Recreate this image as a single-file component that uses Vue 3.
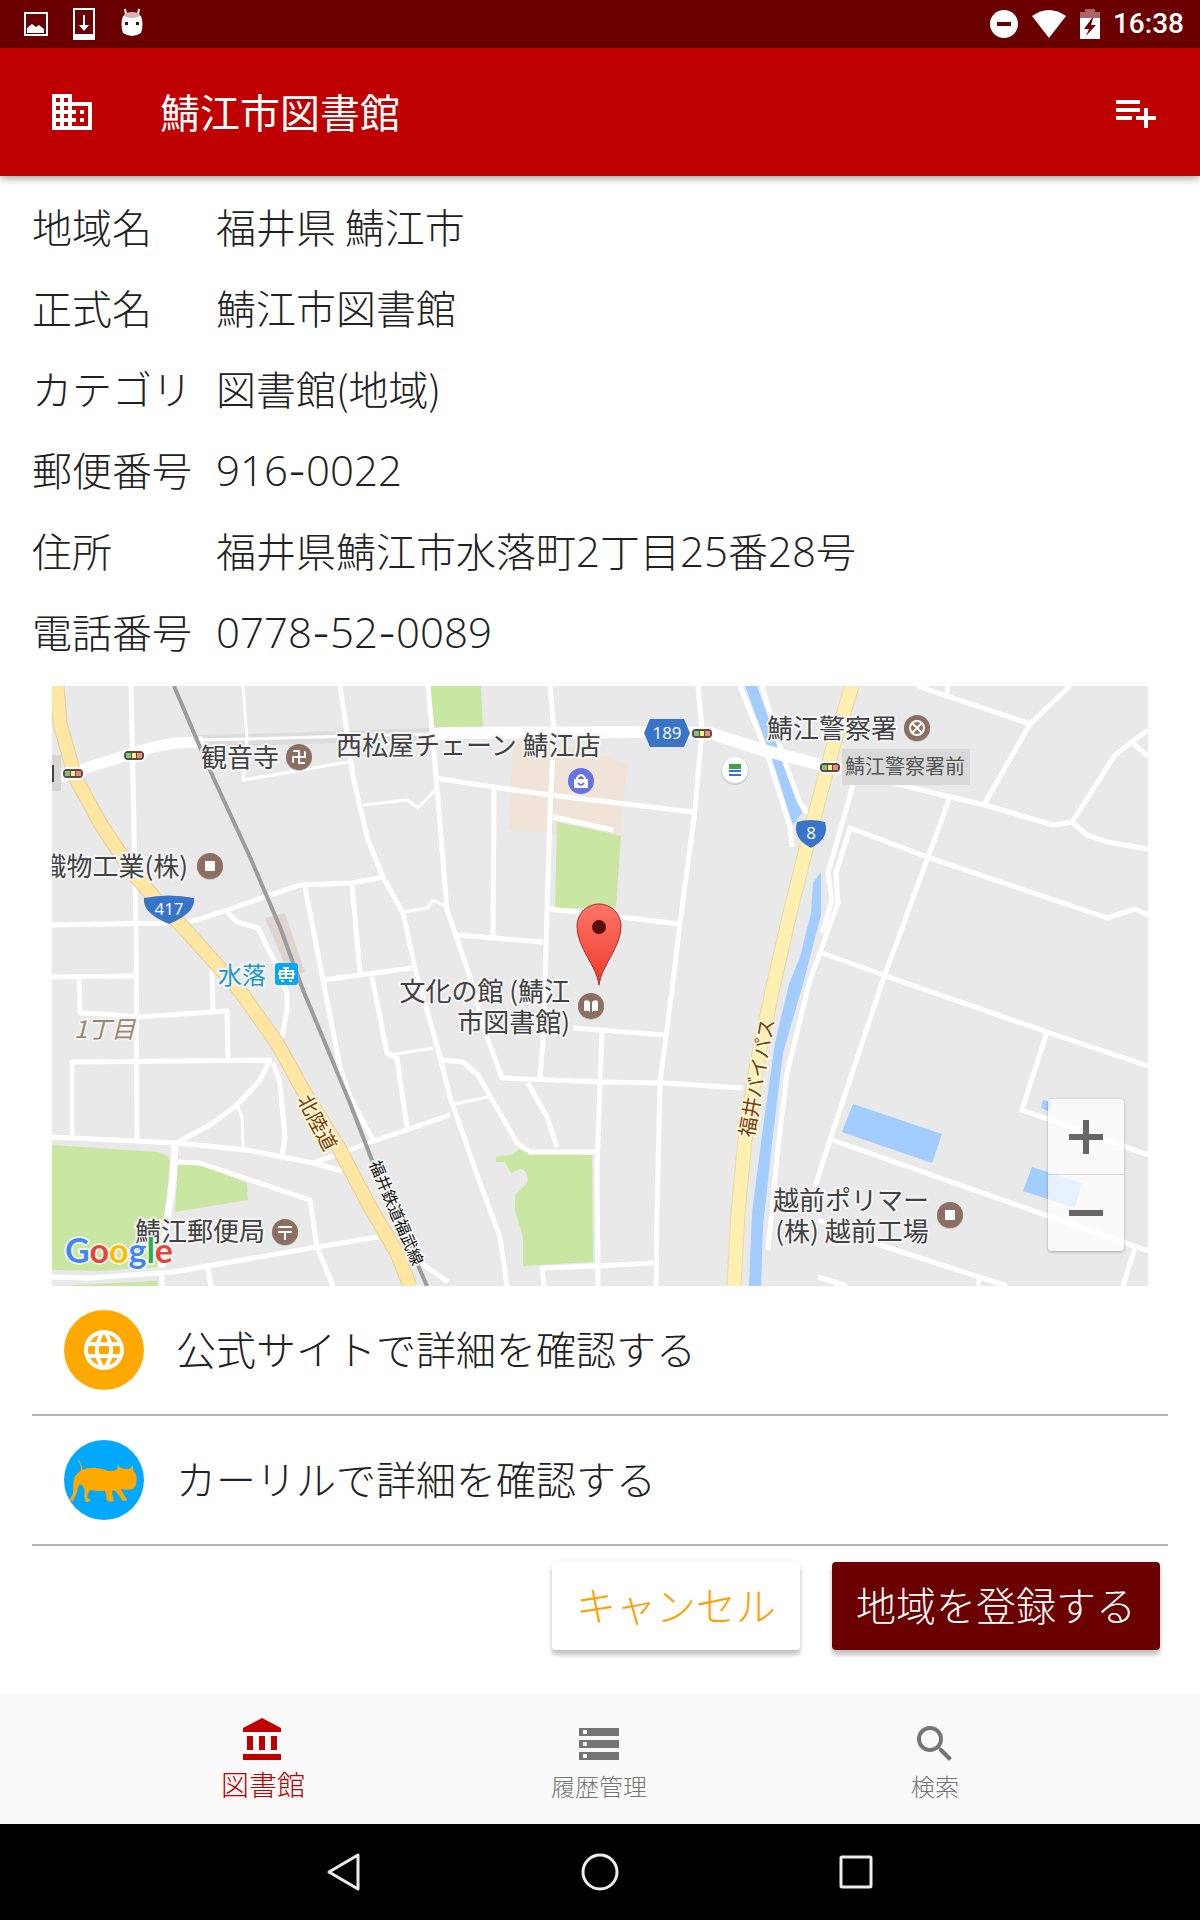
<script setup>
import { ref } from 'vue'

const details = [
  { label: '地域名', value: '福井県 鯖江市' },
  { label: '正式名', value: '鯖江市図書館' },
  { label: 'カテゴリ', value: '図書館(地域)' },
  { label: '郵便番号', value: '916-0022' },
  { label: '住所', value: '福井県鯖江市水落町2丁目25番28号' },
  { label: '電話番号', value: '0778-52-0089' },
].map((row) => ({ ...row, parts: row.value.match(/[0-9]+|-|[^0-9-]+/g) }))

const partClass = (part) => ({ digits: /^[0-9]/.test(part), dash: part === '-' })

const tabs = [
  { name: '図書館', icon: 'M4 10v7h3v-7H4zm6 0v7h3v-7h-3zM2 22h19v-3H2v3zm14-12v7h3v-7h-3zm-4.500-9L2 6v2h19V6l-9.500-5z' },
  { name: '履歴管理', icon: 'M2 20h20v-4H2v4zm2-3h2v2H4v-2zM2 4v4h20V4H2zm4 3H4V5h2v2zm-4 7h20v-4H2v4zm2-3h2v2H4v-2z' },
  { name: '検索', icon: 'M15.500 14h-.790l-.280-.270C15.410 12.590 16 11.110 16 9.500 16 5.910 13.090 3 9.500 3S3 5.910 3 9.500 5.910 16 9.500 16c1.610 0 3.090-.590 4.230-1.570l.270.280v.790l5 4.990L20.490 19l-4.990-5zm-6 0C7.010 14 5 11.990 5 9.500S7.010 5 9.500 5 14 7.010 14 9.500 11.990 14 9.500 14z' },
]
const activeTab = ref('図書館')

const parks = [
  '431,686 481,686 483,727 432,728',
  '557,822 621,836 616,908 555,908',
  '52,1145 158,1152 168,1156 170,1162 160,1267 97,1271 52,1270',
  '178,1165 188,1163 202,1165 247,1183 248,1200 175,1212',
  '73,1285 158,1281 158,1286 73,1286',
]

const water = [
  '745,686 757,686 783,759 802,813 793,825 772,759',
  '821,872 813,883 811,913 800,957 789,984 775,1043 763,1127 752,1213 749,1286 761,1286 763,1227 772,1143 783,1053 803,984 821,915',
  '853,1104 942,1134 932,1163 842,1132',
  '1032,1167 1082,1183 1075,1208 1023,1191',
  '1043,1100 1052,1102 1050,1112 1041,1108',
]

const streets = [
  '131,686 135,880 136,923 137,1140',
  '340,686 347,733 353,777 368,840 383,877 403,913 417,977 427,1010 440,1057 450,1097 480,1183 500,1237 507,1286',
  '428,686 435,763 447,910 470,977 487,1037 502,1078 600,1082 663,1083 743,1088',
  '435,778 493,787 550,795 693,812',
  '52,925 167,923 197,920 227,910 300,885 352,883 383,877',
  '227,912 237,922 258,928 270,953 277,965 287,993 287,1010 282,1037',
  '305,887 323,980 340,1067 350,1097 373,1140',
  '352,885 360,973',
  '323,980 412,968',
  '372,977 387,1053 397,1058 407,1127',
  '52,977 135,976',
  '79,977 80,1013 117,1015 137,1017 227,1011 228,1058',
  '212,966 213,1010',
  '72,1137 72,1062 270,1060 260,1080 237,1105 210,1125 178,1142',
  '273,1063 280,1083 285,1137 282,1155',
  '50,1137 177,1143 247,1150 313,1163 342,1171',
  '313,1163 377,1140 450,1115',
  '178,1162 200,1163 310,1200 317,1247 333,1286',
  '52,1277 90,1278 173,1272 317,1247 378,1237',
  '208,1268 211,1286',
  '162,1270 162,1286',
  '417,1260 448,1282',
  '550,686 554,730 550,813 545,980 543,1040 540,1078',
  '698,686 702,730 695,810 680,923 672,990 660,1083 657,1213 656,1286',
  '494,787 493,937',
  '457,935 543,942',
  '553,817 613,830',
  '550,909 680,924',
  '573,1028 665,1035',
  '602,1032 597,1167 598,1286',
  '440,1060 463,1062 478,1075 517,1143 530,1152 597,1152',
  '528,1083 547,1117 557,1147',
  '544,1286 542,1268 598,1266 653,1263',
  '740,686 767,753 790,827 792,847',
  '762,686 783,757 800,803 808,813',
  '822,767 910,787 950,797 985,805 1053,825 1072,822 1115,755 1132,742 1148,730',
  '853,785 828,873 832,900 822,933',
  '768,1250 778,1147 787,1073 810,980 838,903 836,873 850,828 927,857 1107,918 1135,909 1148,915',
  '950,797 883,980 830,1140 815,1187',
  '822,953 897,980 1047,1032 1148,1066',
  '917,686 1030,724 1070,686',
  '948,686 947,693',
  '1030,724 985,803',
  '1132,742 1148,757',
  '1072,822 1087,835 1107,842 1148,849',
  '1047,1032 1022,1110 1148,1155',
  '832,1140 1148,1251',
  '1135,1248 1123,1286',
  '818,1220 880,1245 1007,1286',
  '980,1277 978,1286',
  '818,1277 847,1286',
]

const lanes = [
  '197,740 247,739 432,734',
  '243,686 247,740 243,780 348,762',
  '363,805 407,800 418,808 435,790',
  '403,912 427,908 433,900 447,907',
  '237,1105 242,1117 243,1147',
  '390,1055 433,1048',
  '450,1105 488,1097',
]

const signals = [[124, 751], [63, 769], [692, 729], [820, 763]]

const places = [
  { x: 201, y: 767, anchor: 'start', text: '観音寺' },
  { x: 336, y: 755, anchor: 'start', text: '西松屋チェーン 鯖江店' },
  { x: 767, y: 738, anchor: 'start', text: '鯖江警察署' },
  { x: 188, y: 876, anchor: 'end', text: '織物工業(株)' },
  { x: 570, y: 1001, anchor: 'end', text: '文化の館 (鯖江' },
  { x: 570, y: 1032, anchor: 'end', text: '市図書館)' },
  { x: 851, y: 1210, anchor: 'middle', text: '越前ポリマー' },
  { x: 852, y: 1241, anchor: 'middle', text: '(株) 越前工場' },
  { x: 135, y: 1241, anchor: 'start', text: '鯖江郵便局' },
]

const badges = [
  { x: 299, y: 757, icon: 'M-6-6H0V6H6M-6 6V0H6V-6' },
  { x: 917, y: 728, icon: 'M-5-5L5 5M5-5L-5 5M7 0A7 7 0 1 1-7 0A7 7 0 1 1 7 0' },
  { x: 210, y: 866, solid: 'M-5-5h10v10h-10z' },
  { x: 950, y: 1215, solid: 'M-5-5h10v10h-10z' },
  { x: 285, y: 1232, icon: 'M-7-5H7M-7 0H7M0 0V8' },
  { x: 591, y: 1006, solid: 'M-7-5Q-3-7-1-4V6Q-3 4-7 5zM7-5Q3-7 1-4V6Q3 4 7 5z' },
]
</script>

<template>
  <div class="screen">
    <div class="status">
      <div class="status-group notices">
        <svg width="24" height="32" viewBox="0 0 24 32" aria-hidden="true">
          <path d="M1 5h22v22H1z" fill="none" stroke="#fff" stroke-width="2" />
          <path d="M3 25v-5l5-4 4 3 3-2 5 4v4z" fill="#fff" />
        </svg>
        <svg width="24" height="32" viewBox="0 0 24 32" aria-hidden="true">
          <path fill="#fff" fill-rule="evenodd" d="M1 0h22v32H1zM3 2v24h18V2zM11 7h2v10h4l-5 6-5-6h4z" />
        </svg>
        <svg width="24" height="32" viewBox="0 0 24 32" aria-hidden="true">
          <path d="M6 6L5 1M18 6l1-5" stroke="#fff" stroke-width="2" />
          <path d="M3 8Q12 2 21 8Q24 16 21 25Q12 31 3 25Q0 16 3 8z" fill="#fff" />
          <ellipse cx="12" cy="7" rx="8" ry="3" fill="#d4b4b4" />
          <path d="M5 14h3v3H5zM16 14h3v3h-3z" fill="#6b0000" />
        </svg>
      </div>
      <div class="status-group">
        <svg width="28" height="28" viewBox="0 0 28 28" aria-hidden="true">
          <circle cx="14" cy="14" r="14" fill="#fff" />
          <path d="M7 12h14v4H7z" fill="#6b0000" />
        </svg>
        <svg width="36" height="30" viewBox="0 0 36 30" aria-hidden="true">
          <path d="M1 7Q18-5 35 7L18 29z" fill="#fff" />
        </svg>
        <svg width="20" height="30" viewBox="0 0 20 30" aria-hidden="true">
          <path d="M0 3h5V0h10v3h5v7H0z" fill="#a66" />
          <path d="M0 9h20v21H0z" fill="#fff" />
          <path d="M12 9L4 20h5l-3 7 10-11h-5l2-7z" fill="#6b0000" />
        </svg>
        <time class="clock">16:38</time>
      </div>
    </div>

    <header class="toolbar">
      <svg class="icon" viewBox="0 0 24 24" aria-hidden="true">
        <path d="M12 7V3H2v18h20V7H12zM6 19H4v-2h2v2zm0-4H4v-2h2v2zm0-4H4V9h2v2zm0-4H4V5h2v2zm4 12H8v-2h2v2zm0-4H8v-2h2v2zm0-4H8V9h2v2zm0-4H8V5h2v2zm10 12h-8v-2h2v-2h-2v-2h2v-2h-2V9h8v10zm-2-8h-2v2h2v-2zm0 4h-2v2h2v-2z" />
      </svg>
      <h1 class="title">鯖江市図書館</h1>
      <button class="plain" type="button" aria-label="リストに追加">
        <svg class="icon" viewBox="0 0 24 24" aria-hidden="true">
          <path d="M14 10H2v2h12v-2zm0-4H2v2h12V6zm4 8v-4h-2v4h-4v2h4v4h2v-4h4v-2h-4zM2 16h8v-2H2v2z" />
        </svg>
      </button>
    </header>

    <main class="content">
      <dl class="details">
        <div v-for="row in details" :key="row.label" class="detail">
          <dt>{{ row.label }}</dt>
          <dd><span v-for="(part, i) in row.parts" :key="i" :class="partClass(part)">{{ part }}</span></dd>
        </div>
      </dl>

      <section class="map" aria-label="地図">
        <svg class="map-canvas" viewBox="52 686 1096 600">
          <rect x="52" y="686" width="1096" height="600" fill="#e9e9e9" />
          <polygon points="513,740 553,740 610,758 627,763 620,838 550,833 509,830" fill="#f0e4d8" />
          <polygon points="265,918 285,913 305,972 290,977" fill="#e0d4d0" />
          <g fill="#cae6a3">
            <polygon v-for="shape in parks" :key="shape" :points="shape" />
            <path d="M496 1156L512 1155 519 1149 530 1153 592 1155 593 1262 523 1266 523 1237 515 1210 515 1195 527 1183Q529 1170 520 1169L511 1173 505 1162H496z" />
          </g>
          <polygon v-for="shape in water" :key="shape" :points="shape" fill="#a3ccff" />

          <polyline points="197,741 247,740 432,734" fill="none" stroke="#dcdcdc" stroke-width="12" />
          <g class="road">
            <polyline v-for="line in lanes" :key="line" :points="line" stroke-width="3" />
            <polyline v-for="line in streets" :key="line" :points="line" stroke-width="5" />
            <polyline points="175,1143 173,1180 167,1220 161,1267" stroke-width="7" />
            <polyline points="60,777 83,769 127,755 153,747 177,743 203,742" stroke-width="11" />
            <polyline points="432,734 450,733 650,732 710,733 763,750 826,766" stroke-width="12" />
          </g>

          <g fill="none" stroke-linejoin="round">
            <polyline points="57,686 60,723 75,777 100,823 133,873 158,902 183,927 217,965 240,991 277,1043 303,1090 340,1150 370,1207 397,1253 410,1286" stroke="#e6cf95" stroke-width="15" />
            <polyline points="57,686 60,723 75,777 100,823 133,873 158,902 183,927 217,965 240,991 277,1043 303,1090 340,1150 370,1207 397,1253 410,1286" stroke="#ffe6a3" stroke-width="13" />
            <polyline points="852,686 833,747 810,833 790,913 773,987 757,1063 745,1140 738,1213 734,1286" stroke="#e8d9a0" stroke-width="15" />
            <polyline points="852,686 833,747 810,833 790,913 773,987 757,1063 745,1140 738,1213 734,1286" stroke="#ffefb0" stroke-width="13" />
            <polyline points="174,686 200,747 213,777 250,857 280,927 303,990 350,1103 373,1163 417,1263 427,1286" stroke="#9c9c9c" stroke-width="4" />
          </g>

          <g v-for="[x, y] in signals" :key="x" :transform="`translate(${x} ${y})`">
            <rect x="-2" y="-2" width="24" height="13" rx="6" fill="#fff" />
            <rect width="20" height="9" rx="4" fill="#5d4a40" />
            <rect x="2" y="2" width="5" height="5" fill="#7fc08a" />
            <rect x="8" y="2" width="4" height="5" fill="#fff07a" />
            <rect x="13" y="2" width="5" height="5" fill="#ee8a84" />
          </g>

          <rect x="52" y="755" width="9" height="36" fill="#d6d6d6" />
          <rect x="52" y="765" width="2" height="17" fill="#424242" />
          <rect x="842" y="749" width="128" height="36" fill="#d9d9d9" />
          <text x="845" y="774" class="stop">鯖江警察署前</text>

          <text v-for="place in places" :key="place.text" class="place" :x="place.x" :y="place.y" :text-anchor="place.anchor">{{ place.text }}</text>
          <text x="218" y="984" class="place station">水落</text>
          <text x="74" y="1038" class="place block">1丁目</text>
          <text class="place route-name" text-anchor="middle" transform="translate(311 1126) rotate(62)">北陸道</text>
          <text class="place route-name" text-anchor="middle" transform="translate(764 1079) rotate(-80)">福井バイパス</text>
          <text class="place rail-name" text-anchor="middle" transform="translate(391 1215) rotate(67)">福井鉄道福武線</text>

          <g v-for="badge in badges" :key="badge.x" :transform="`translate(${badge.x} ${badge.y})`">
            <circle cy="1" r="13" fill="#c8c0bc" />
            <circle r="13" fill="#8d6e63" />
            <path v-if="badge.icon" :d="badge.icon" fill="none" stroke="#fff" stroke-width="2" />
            <path v-else :d="badge.solid" fill="#fff" />
          </g>
          <g transform="translate(581 781)">
            <circle r="13" fill="#6673e5" />
            <path d="M-7-2H7V7H-7z" fill="#fff" />
            <path d="M-4-1V-3Q0-9 4-3V-1" fill="none" stroke="#fff" stroke-width="2" />
            <path d="M-3 2Q0 6 3 2" fill="none" stroke="#6673e5" stroke-width="2" />
          </g>
          <g transform="translate(735 770)">
            <circle cy="1" r="14" fill="#d0d0d0" />
            <circle r="13" fill="#fff" />
            <path d="M-6-6H6V-1H-6z" fill="#43a047" />
            <path d="M-6 1H6M-6 5H6" stroke="#3b6fe0" stroke-width="2" />
          </g>
          <g transform="translate(275 963)">
            <rect width="23" height="22" rx="3" fill="#03a9f4" />
            <path d="M5 8h13v7H5zM5 8v7M11 4v11M8 5h6M3 11h17M6 18h3M14 18h3" fill="none" stroke="#fff" stroke-width="2" />
          </g>

          <g fill="#3875c8">
            <path d="M144 898Q169 893 194 898Q196 913 169 924Q142 913 144 898z" />
            <path d="M650 719H684L690 733 684 747H650L644 733z" />
            <path d="M797 822Q811 818 825 822Q830 838 811 848Q792 838 797 822z" />
          </g>
          <g class="shield" text-anchor="middle">
            <text x="169" y="915">417</text>
            <text x="667" y="739">189</text>
            <text x="811" y="839">8</text>
          </g>

          <defs>
            <linearGradient id="pin-fill" x1="0" y1="0" x2="0" y2="1">
              <stop offset="0" stop-color="#fd7567" />
              <stop offset="1" stop-color="#ee3a2c" />
            </linearGradient>
          </defs>
          <path d="M599 985C597 966 577 948 577 926A22 22 0 0 1 621 926C621 948 601 966 599 985z" fill="url(#pin-fill)" stroke="#a83022" />
          <circle cx="599" cy="927" r="7" fill="#5a0d0a" />

          <text x="65" y="1263" class="brand"><tspan fill="#4285f4">G</tspan><tspan fill="#ea4335">o</tspan><tspan fill="#fbbc05">o</tspan><tspan fill="#4285f4">g</tspan><tspan fill="#34a853">l</tspan><tspan fill="#ea4335">e</tspan></text>
        </svg>
        <div class="zoom">
          <button type="button" aria-label="拡大">
            <svg width="34" height="34" viewBox="0 0 34 34" aria-hidden="true"><path d="M14 0h6v14h14v6H20v14h-6V20H0v-6h14z" fill="#666" /></svg>
          </button>
          <button type="button" aria-label="縮小">
            <svg width="34" height="34" viewBox="0 0 34 34" aria-hidden="true"><path d="M0 14h34v6H0z" fill="#666" /></svg>
          </button>
        </div>
      </section>

      <nav class="links">
        <a class="link" href="#official">
          <svg class="avatar" viewBox="0 0 80 80" aria-hidden="true">
            <circle cx="40" cy="40" r="40" fill="#ffa800" />
            <path transform="translate(16 16) scale(2)" fill="#fff" d="M11.990 2C6.470 2 2 6.480 2 12s4.470 10 9.990 10C17.520 22 22 17.520 22 12S17.520 2 11.990 2zm6.930 6h-2.950c-.320-1.250-.780-2.450-1.380-3.560 1.840.630 3.370 1.910 4.330 3.560zM12 4.040c.830 1.200 1.480 2.530 1.910 3.960h-3.820c.430-1.430 1.080-2.760 1.910-3.960zM4.260 14C4.100 13.360 4 12.690 4 12s.100-1.360.260-2h3.380c-.080.660-.140 1.320-.140 2 0 .680.060 1.340.140 2H4.260zm.820 2h2.950c.320 1.250.780 2.450 1.380 3.560-1.840-.630-3.370-1.900-4.330-3.560zm2.950-8H5.080c.960-1.660 2.490-2.930 4.330-3.560C8.810 5.550 8.350 6.750 8.030 8zM12 19.960c-.830-1.200-1.480-2.530-1.910-3.960h3.820c-.430 1.430-1.080 2.760-1.910 3.960zM14.340 14H9.660c-.090-.660-.160-1.320-.160-2 0-.680.070-1.350.160-2h4.680c.090.650.160 1.320.160 2 0 .680-.070 1.340-.160 2zm.250 5.560c.600-1.110 1.060-2.310 1.380-3.560h2.950c-.960 1.650-2.490 2.930-4.330 3.560zM16.360 14c.080-.660.140-1.320.140-2 0-.680-.060-1.340-.140-2h3.380c.160.640.260 1.310.260 2s-.100 1.360-.260 2h-3.380z" />
          </svg>
          <span>公式サイトで詳細を確認する</span>
        </a>
        <a class="link" href="#calil">
          <svg class="avatar" viewBox="0 0 240 240" aria-hidden="true">
            <circle cx="120" cy="120" r="120" fill="#00a8ff" />
            <path fill="#ffa800" d="M50 92Q54 76 44 66Q41 60 44 57Q46 66 51 72Q57 80 55 90Q70 82 90 83Q112 84 133 93Q148 94 159 89L162 74Q166 83 176 86L197 87 205 76Q208 84 208 94Q218 100 218 118Q218 138 208 146Q194 152 170 147L190 181Q180 186 173 179Q168 168 158 158Q148 148 144 152Q144 165 150 182Q138 188 128 180Q128 165 123 152Q96 155 78 149Q70 160 70 174L80 180Q74 190 63 184Q60 170 62 150Q55 130 46 134Q40 142 40 154Q36 166 32 170L28 184Q20 186 17 176Q28 166 28 150Q26 120 34 108Q42 98 50 92z" />
          </svg>
          <span>カーリルで詳細を確認する</span>
        </a>
      </nav>

      <div class="actions">
        <button class="action cancel" type="button">キャンセル</button>
        <button class="action submit" type="button">地域を登録する</button>
      </div>
    </main>

    <nav class="tabs">
      <button
        v-for="tab in tabs"
        :key="tab.name"
        type="button"
        class="tab"
        :class="{ active: tab.name === activeTab }"
        @click="activeTab = tab.name"
      >
        <svg class="icon" viewBox="0 0 24 24" aria-hidden="true"><path :d="tab.icon" /></svg>
        <span>{{ tab.name }}</span>
      </button>
    </nav>

    <div class="system">
      <button class="plain" type="button" aria-label="戻る">
        <svg width="40" height="40" viewBox="0 0 40 40" aria-hidden="true"><path d="M34 3V37L5 20z" /></svg>
      </button>
      <button class="plain" type="button" aria-label="ホーム">
        <svg width="40" height="40" viewBox="0 0 40 40" aria-hidden="true"><circle cx="20" cy="20" r="17" /></svg>
      </button>
      <button class="plain" type="button" aria-label="履歴">
        <svg width="40" height="40" viewBox="0 0 40 40" aria-hidden="true"><rect x="5" y="5" width="30" height="30" rx="1" /></svg>
      </button>
    </div>
  </div>
</template>

<style>
body {
  margin: 0;
}
</style>

<style scoped>
.screen {
  display: flex;
  flex-direction: column;
  min-height: 100vh;
  background: #fff;
  color: #212121;
  font-family: "Noto Sans CJK JP", sans-serif;
  font-size: 40px;
  font-weight: 300;
}

button {
  border: 0;
  padding: 0;
  background: none;
  color: inherit;
  font: inherit;
  cursor: pointer;
}

svg {
  display: block;
}

.icon {
  width: 48px;
  height: 48px;
  fill: currentColor;
}

.plain {
  display: flex;
}

.status {
  display: flex;
  justify-content: space-between;
  align-items: center;
  height: 48px;
  padding: 0 16px 0 24px;
  background: #6b0000;
  color: #fff;
}

.status-group {
  display: flex;
  align-items: center;
  gap: 13px;
}

.notices {
  gap: 24px;
}

.clock {
  font-family: Roboto, sans-serif;
  font-size: 28px;
  font-weight: 500;
  line-height: 48px;
}

.toolbar {
  display: flex;
  align-items: center;
  height: 128px;
  padding: 0 40px 0 48px;
  background: #bf0000;
  box-shadow: 0 2px 8px rgba(0, 0, 0, 0.4);
  color: #fff;
}

.title {
  flex: 1;
  margin: 0 0 0 64px;
  padding-bottom: 2px;
  font-size: 40px;
  font-weight: 400;
  line-height: 56px;
}

.content {
  flex: 1;
  padding: 12px 32px 44px;
}

.details {
  margin: 0 0 12px;
}

.detail {
  display: grid;
  grid-template-columns: 184px 1fr;
  line-height: 77px;
}

.detail dt,
.detail dd {
  margin: 0;
  height: 81px;
}

.digits {
  font-family: "Open Sans", sans-serif;
  font-size: 42px;
}

.dash {
  font-family: Inter, sans-serif;
}

.map {
  position: relative;
  margin: 0 20px;
}

.map-canvas {
  width: 100%;
  height: auto;
}

.road {
  fill: none;
  stroke: #fff;
  stroke-linejoin: round;
}

.place {
  fill: #424242;
  stroke: #f4f4f4;
  stroke-width: 4px;
  stroke-linejoin: round;
  paint-order: stroke;
  font-size: 26px;
  font-weight: 400;
}

.stop {
  fill: #555;
  font-size: 20px;
  font-weight: 400;
}

.station {
  fill: #2196d3;
  font-size: 24px;
}

.block {
  fill: #94896c;
  font-size: 24px;
  font-style: italic;
}

.route-name {
  fill: #7a4100;
  stroke: #fff6dd;
  font-size: 20px;
}

.rail-name {
  fill: #111;
  font-size: 16px;
}

.shield {
  fill: #fff;
  font-family: "Open Sans", sans-serif;
  font-size: 17px;
  font-weight: 400;
}

.brand {
  stroke: #fff;
  stroke-width: 3px;
  paint-order: stroke;
  font-family: Lato, sans-serif;
  font-size: 34px;
  font-weight: 700;
}

.zoom {
  position: absolute;
  right: 24px;
  bottom: 35px;
  border-radius: 4px;
  background: rgba(255, 255, 255, 0.75);
  box-shadow: 0 1px 3px rgba(0, 0, 0, 0.3);
}

.zoom button {
  display: grid;
  place-items: center;
  width: 76px;
  height: 76px;
}

.zoom button + button {
  box-shadow: 0 -1px 0 #d8d8d8;
}

.link {
  display: flex;
  align-items: center;
  gap: 32px;
  padding: 24px 32px;
  border-bottom: 2px solid #b4b4b4;
  color: inherit;
  line-height: 76px;
  text-decoration: none;
}

.link span {
  padding-bottom: 4px;
}

.avatar {
  width: 80px;
  height: 80px;
}

.actions {
  display: flex;
  justify-content: flex-end;
  gap: 32px;
  padding: 16px 8px 0;
}

.action {
  height: 88px;
  padding: 0 24px 4px;
  border-radius: 4px;
  box-shadow: 0 5px 4px rgba(0, 0, 0, 0.2), 0 2px 8px rgba(0, 0, 0, 0.08);
}

.cancel {
  background: #fff;
  color: #ffa000;
}

.submit {
  background: #6b0000;
  color: #fff;
}

.tabs {
  display: flex;
  justify-content: center;
  height: 130px;
  padding-right: 2px;
  background: #fafafa;
}

.tab {
  display: flex;
  flex: 0 1 336px;
  flex-direction: column;
  align-items: center;
  justify-content: flex-end;
  padding-bottom: 20px;
  color: #757575;
  font-size: 24px;
  line-height: 36px;
}

.tab.active {
  color: #bf0000;
  font-size: 28px;
  line-height: 40px;
}

.system {
  display: flex;
  justify-content: center;
  align-items: center;
  gap: 216px;
  height: 96px;
  background: #000;
}

.system svg {
  fill: none;
  stroke: #eee;
  stroke-width: 3px;
  stroke-linejoin: round;
}
</style>
